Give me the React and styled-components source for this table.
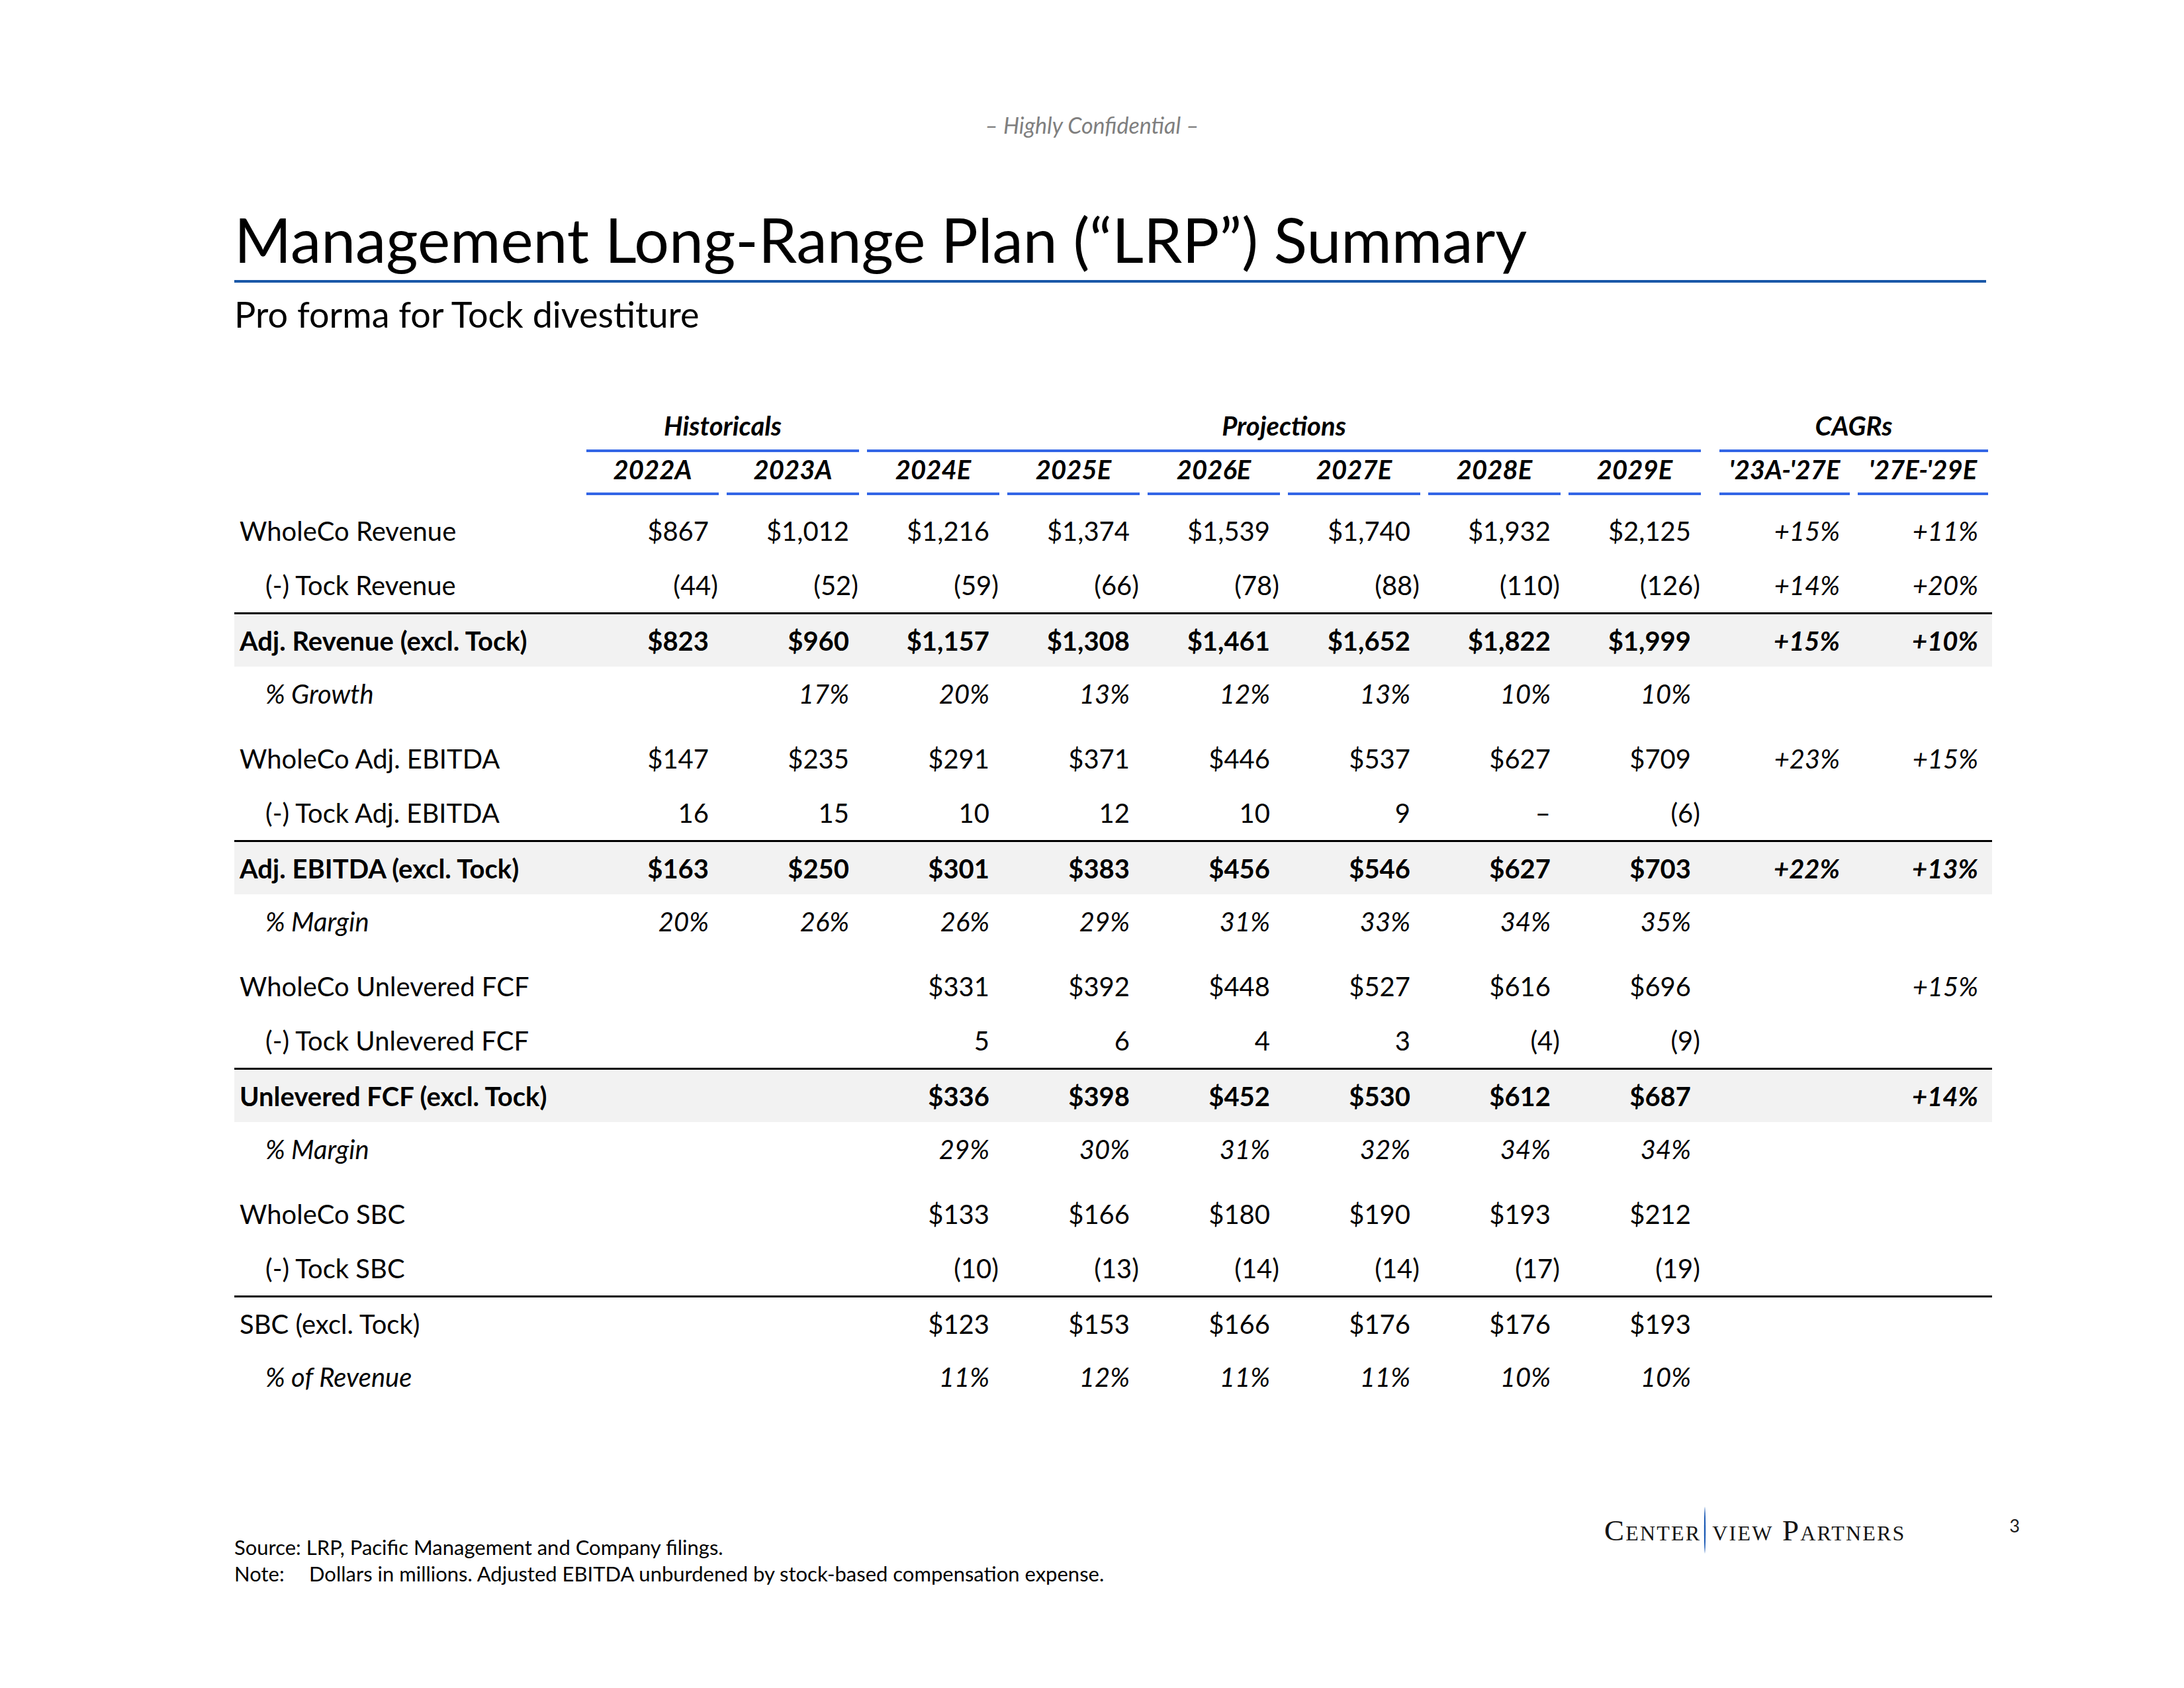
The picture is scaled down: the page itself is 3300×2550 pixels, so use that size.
import React from "react";
import styled, { createGlobalStyle } from "styled-components";

const GlobalStyle = createGlobalStyle`
  html, body { margin: 0; padding: 0; background: #ffffff; }
  body { font-family: Lato, "Open Sans", sans-serif; color: #000; }
`;

const COLS = "526px repeat(8, 212px) 16px 209px 209px";
const HEADER_BLUE = "#3366e6";

const Page = styled.div`
  width: 3300px;
  height: 2550px;
  box-sizing: border-box;
  background: #fff;
  display: flex;
  flex-direction: column;
  font-family: Lato, "Open Sans", sans-serif;
  color: #000;
`;

const Confidential = styled.div`
  margin-top: 169px;
  height: 40px;
  line-height: 40px;
  text-align: center;
  font-size: 34px;
  font-style: italic;
  font-weight: 400;
  color: #7f7f7f;
`;

const Content = styled.div`
  margin-left: 354px;
  width: 2656px;
  display: flex;
  flex-direction: column;
`;

const Title = styled.h1`
  margin: 102px 0 0;
  font-size: 93px;
  line-height: 100px;
  font-weight: 400;
  white-space: nowrap;
`;

const TitleRule = styled.div`
  margin-top: 12px;
  width: 2647px;
  height: 4px;
  background: #1a58a8;
`;

const Subtitle = styled.div`
  margin-top: 18px;
  font-size: 54px;
  line-height: 60px;
  white-space: nowrap;
`;

const Table = styled.div`
  margin-top: 106px;
  display: flex;
  flex-direction: column;
`;

const Row = styled.div`
  display: grid;
  grid-template-columns: ${COLS};
`;

const GroupCell = styled.div`
  grid-column: span ${(p) => p.$span || 1};
  margin: 0 6px;
  height: 64px;
  line-height: 64px;
  padding-bottom: 4px;
  border-bottom: ${(p) => (p.$empty ? "none" : `4px solid ${HEADER_BLUE}`)};
  text-align: center;
  font-size: 40px;
  font-weight: 700;
  font-style: italic;
  white-space: nowrap;
`;

const YearCell = styled.div`
  margin: 0 6px;
  height: 52px;
  line-height: 52px;
  padding-bottom: 9px;
  border-bottom: ${(p) => (p.$empty ? "none" : `4px solid ${HEADER_BLUE}`)};
  text-align: center;
  font-size: 40px;
  font-weight: 700;
  font-style: italic;
  white-space: nowrap;
`;

const Block = styled.div`
  margin-top: ${(p) => p.$gap}px;
  display: flex;
  flex-direction: column;
`;

const DataRow = styled(Row)`
  height: 82px;
  box-sizing: border-box;
  align-items: center;
  border-top: ${(p) => (p.$rule ? "3px solid #000" : "none")};
  background: ${(p) => (p.$band ? "#f2f2f2" : "transparent")};
  font-size: 40px;
  line-height: 50px;
  font-weight: ${(p) => (p.$bold ? 700 : 400)};
  font-style: ${(p) => (p.$italic ? "italic" : "normal")};
`;

const Label = styled.div`
  padding-left: ${(p) => (p.$indent ? 47 : 8)}px;
  white-space: nowrap;
`;

const Value = styled.div`
  text-align: right;
  padding-right: 21px;
  white-space: nowrap;
  font-style: ${(p) => (p.$italic ? "italic" : "inherit")};
`;

const Paren = styled.span`
  margin-right: -14px;
`;

const Footer = styled.div`
  margin-top: 155px;
  margin-left: 354px;
  width: 2698px;
  display: grid;
  grid-template-columns: 2070px 462px 1fr;
  align-items: start;
`;

const Notes = styled.div`
  margin-top: 41px;
  font-size: 31px;
  line-height: 40px;
  display: flex;
  flex-direction: column;
`;

const NoteLine = styled.div`
  display: flex;
  white-space: nowrap;
`;

const NoteLabel = styled.span`
  width: 113px;
  flex: none;
`;

const Logo = styled.div`
  display: flex;
  align-items: center;
  height: 71px;
  font-family: "Liberation Serif", "Times New Roman", serif;
  font-variant: small-caps;
  font-size: 45px;
  line-height: 50px;
  letter-spacing: 2.2px;
  color: #141414;
  white-space: nowrap;
`;

const LogoBar = styled.svg`
  flex: none;
  margin: 0 8px 0 3px;
`;

const PageNum = styled.div`
  margin-top: 14px;
  text-align: right;
  font-size: 27px;
  line-height: 30px;
  color: #1a1a1a;
`;

const groups = [
  { label: "", span: 1, empty: true },
  { label: "Historicals", span: 2 },
  { label: "Projections", span: 6 },
  { label: "", span: 1, empty: true },
  { label: "CAGRs", span: 2 },
];

const years = ["2022A", "2023A", "2024E", "2025E", "2026E", "2027E", "2028E", "2029E"];
const cagrHeads = ["'23A-'27E", "'27E-'29E"];

const blocks = [
  [
    { label: "WholeCo Revenue", v: ["$867", "$1,012", "$1,216", "$1,374", "$1,539", "$1,740", "$1,932", "$2,125"], c: ["+15%", "+11%"] },
    { label: "(-) Tock Revenue", indent: true, v: ["(44)", "(52)", "(59)", "(66)", "(78)", "(88)", "(110)", "(126)"], c: ["+14%", "+20%"] },
    { label: "Adj. Revenue (excl. Tock)", bold: true, band: true, rule: true, v: ["$823", "$960", "$1,157", "$1,308", "$1,461", "$1,652", "$1,822", "$1,999"], c: ["+15%", "+10%"] },
    { label: "% Growth", indent: true, italic: true, v: ["", "17%", "20%", "13%", "12%", "13%", "10%", "10%"], c: ["", ""] },
  ],
  [
    { label: "WholeCo Adj. EBITDA", v: ["$147", "$235", "$291", "$371", "$446", "$537", "$627", "$709"], c: ["+23%", "+15%"] },
    { label: "(-) Tock Adj. EBITDA", indent: true, v: ["16", "15", "10", "12", "10", "9", "–", "(6)"], c: ["", ""] },
    { label: "Adj. EBITDA (excl. Tock)", bold: true, band: true, rule: true, v: ["$163", "$250", "$301", "$383", "$456", "$546", "$627", "$703"], c: ["+22%", "+13%"] },
    { label: "% Margin", indent: true, italic: true, v: ["20%", "26%", "26%", "29%", "31%", "33%", "34%", "35%"], c: ["", ""] },
  ],
  [
    { label: "WholeCo Unlevered FCF", v: ["", "", "$331", "$392", "$448", "$527", "$616", "$696"], c: ["", "+15%"] },
    { label: "(-) Tock Unlevered FCF", indent: true, v: ["", "", "5", "6", "4", "3", "(4)", "(9)"], c: ["", ""] },
    { label: "Unlevered FCF (excl. Tock)", bold: true, band: true, rule: true, v: ["", "", "$336", "$398", "$452", "$530", "$612", "$687"], c: ["", "+14%"] },
    { label: "% Margin", indent: true, italic: true, v: ["", "", "29%", "30%", "31%", "32%", "34%", "34%"], c: ["", ""] },
  ],
  [
    { label: "WholeCo SBC", v: ["", "", "$133", "$166", "$180", "$190", "$193", "$212"], c: ["", ""] },
    { label: "(-) Tock SBC", indent: true, v: ["", "", "(10)", "(13)", "(14)", "(14)", "(17)", "(19)"], c: ["", ""] },
    { label: "SBC (excl. Tock)", rule: true, v: ["", "", "$123", "$153", "$166", "$176", "$176", "$193"], c: ["", ""] },
    { label: "% of Revenue", indent: true, italic: true, v: ["", "", "11%", "12%", "11%", "11%", "10%", "10%"], c: ["", ""] },
  ],
];

function Num({ text }) {
  if (text.startsWith("(") && text.endsWith(")")) {
    return (
      <>
        {text.slice(0, -1)}
        <Paren>)</Paren>
      </>
    );
  }
  return text;
}

function TableRow({ row }) {
  return (
    <DataRow $rule={row.rule} $band={row.band} $bold={row.bold} $italic={row.italic}>
      <Label $indent={row.indent}>{row.label}</Label>
      {row.v.map((t, i) => (
        <Value key={i}>
          <Num text={t} />
        </Value>
      ))}
      <div />
      {row.c.map((t, i) => (
        <Value key={"c" + i} $italic>
          {t}
        </Value>
      ))}
    </DataRow>
  );
}

export default function App() {
  return (
    <Page>
      <GlobalStyle />
      <Confidential>– Highly Confidential –</Confidential>
      <Content>
        <Title>Management Long-Range Plan (“LRP”) Summary</Title>
        <TitleRule />
        <Subtitle>Pro forma for Tock divestiture</Subtitle>
        <Table>
          <Row>
            {groups.map((g, i) => (
              <GroupCell key={i} $span={g.span} $empty={g.empty}>
                {g.label}
              </GroupCell>
            ))}
          </Row>
          <Row>
            <YearCell $empty />
            {years.map((y) => (
              <YearCell key={y}>{y}</YearCell>
            ))}
            <YearCell $empty />
            {cagrHeads.map((y) => (
              <YearCell key={y}>{y}</YearCell>
            ))}
          </Row>
          {blocks.map((b, bi) => (
            <Block key={bi} $gap={bi === 0 ? 13 : 16}>
              {b.map((r, ri) => (
                <TableRow key={ri} row={r} />
              ))}
            </Block>
          ))}
        </Table>
      </Content>
      <Footer>
        <Notes>
          <NoteLine>Source: LRP, Pacific Management and Company filings.</NoteLine>
          <NoteLine>
            <NoteLabel>Note:</NoteLabel>
            Dollars in millions. Adjusted EBITDA unburdened by stock-based compensation expense.
          </NoteLine>
        </Notes>
        <Logo>
          Center
          <LogoBar width="6" height="71" viewBox="0 0 6 71">
            <path d="M3 0 C4.6 12 4.6 59 3 71 C1.4 59 1.4 12 3 0 Z" fill="#1d5bb5" />
          </LogoBar>
          view Partners
        </Logo>
        <PageNum>3</PageNum>
      </Footer>
    </Page>
  );
}
